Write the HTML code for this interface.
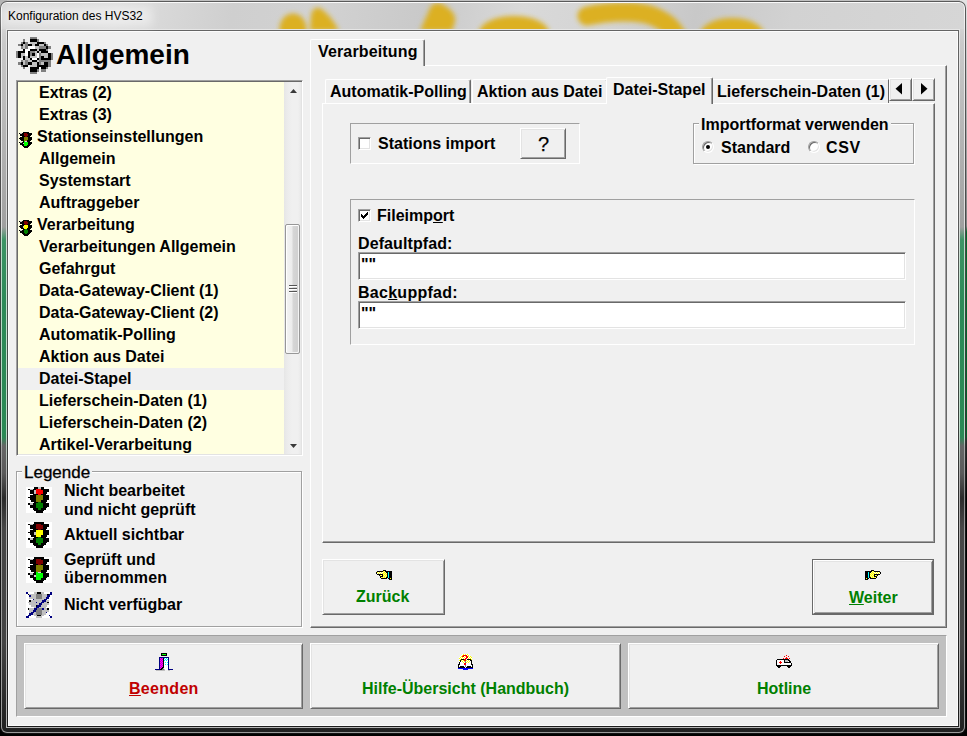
<!DOCTYPE html>
<html lang="de">
<head>
<meta charset="utf-8">
<title>Konfiguration des HVS32</title>
<style>
*{box-sizing:border-box;margin:0;padding:0}
html,body{width:967px;height:736px;overflow:hidden}
body{position:relative;background:#000;font-family:"Liberation Sans",Arial,sans-serif;font-size:16px;font-weight:bold;color:#000}
.a{position:absolute}
.t{position:absolute;white-space:nowrap;line-height:18px;height:18px}
.n{font-weight:normal}
u{text-decoration:underline;text-underline-offset:1px;text-decoration-thickness:1px}
/* outside strips */
#o-top{left:0;top:0;width:967px;height:8px;background:#c0c0c0}
#o-right{left:960px;top:0;width:7px;height:736px;background:linear-gradient(#e4e4e4 0,#c8c8c8 60px,#808080 226px,#056a2c 232px,#045c26 437px,#2a2a2a 441px,#000 500px,#000 100%)}
#o-left{left:0;top:0;width:7px;height:20px;background:#b4b4b4}
/* window frame */
#f0{left:0;top:1px;width:966px;height:733px;border-radius:7px;background:linear-gradient(#5a5a5a 0,#4c4c4c 200px,#3b4a41 300px,#333 440px,#161616 500px,#111 100%)}
#f1{left:1px;top:2px;width:964px;height:731px;border-radius:6px;background:linear-gradient(#fafafa 0,#ececec 28px,#dedede 225px,#b9dcc8 236px,#b4d8c2 436px,#a8a8a8 444px,#8c8c8c 495px,#a0a0a0 540px,#9a9a9a 100%)}
#f2{left:2px;top:3px;width:962px;height:729px;border-radius:5px;background:linear-gradient(#dcdcdc 0,#d2d2d2 26px,#cacaca 40px,#a2a2a2 215px,#9f9f9f 224px,#3c9465 237px,#2d8a58 300px,#2b8955 434px,#666 443px,#5a5a5a 470px,#2b2b2b 495px,#474747 525px,#444 640px,#2a2a2a 700px,#202020 100%)}
#tb{left:2px;top:3px;width:962px;height:26px;overflow:hidden;border-radius:5px 5px 0 0;background:linear-gradient(100deg,#d6d6d6 0,#dedede 12%,#cfcfcf 24%,#d2d2d2 33%,#c9c9c9 44%,#d9d9d9 54%,#d4d4d4 63%,#c8c8c8 72%,#d2d2d2 82%,#d6d6d6 100%)}
.bl{position:absolute;background:#dcb022;filter:blur(1.6px)}
#c0{left:6px;top:29px;width:954px;height:699px;background:linear-gradient(#e6e6e6 0,#d8d8d8 190px,#c8e2d2 240px,#c0dccb 400px,#b0b0b0 445px,#b4b4b4 100%)}
#c1{left:7px;top:30px;width:952px;height:697px;background:linear-gradient(#646464 0,#585858 200px,#44524a 300px,#333 445px,#222 520px,#1c1c1c 100%)}
#cl{left:8px;top:31px;width:950px;height:695px;background:#f0f0f0;border:1px solid #fcfcfc}
#ttl{left:8px;top:9px;font:normal 12px/14px "Liberation Sans",sans-serif;letter-spacing:0;white-space:nowrap}
/* 3d */
.btn{position:absolute;background:#f0f0f0;border:1px solid;border-color:#fff #696969 #696969 #fff;box-shadow:inset 1px 1px #e3e3e3,inset -1px -1px #a0a0a0}
.sunk{position:absolute;border:1px solid;border-color:#a0a0a0 #fff #fff #a0a0a0;box-shadow:inset 1px 1px #696969,inset -1px -1px #e3e3e3}
.etch{position:absolute;border:1px solid;border-color:#a0a0a0 #fff #fff #a0a0a0}
.grp{position:absolute;border:1px solid #a0a0a0;box-shadow:1px 1px #fff,inset 1px 1px #fff}
svg{position:absolute;overflow:visible}
.px{shape-rendering:crispEdges}
/* list */
#lb{left:16px;top:80px;width:287px;height:376px;background:#ffffe1}
#lbc{position:absolute;left:1px;top:1px;width:266px;height:372px;overflow:hidden}
.li{position:absolute;left:0;width:266px;height:22px}
.li span{position:absolute;left:21px;top:2px;line-height:18px;white-space:nowrap}
.li.h span{left:19px}
.sel{background:#f0f0f0}
#sb{position:absolute;left:267px;top:1px;width:17px;height:372px;background:linear-gradient(90deg,#e6e6e6 0,#ebebeb 3px,#f0f0f0 8px,#f0f0f0 14px,#e9e9e9 17px)}
#th{position:absolute;left:1px;top:142px;width:15px;height:130px;border:1px solid #979797;border-radius:2px;background:linear-gradient(90deg,#f4f4f4 0,#ececec 45%,#d6d6d6 55%,#cfcfcf 100%);box-shadow:inset 1px 1px #fff,inset -1px -1px #f4f4f4}

.itab{border:1px solid;border-color:#fff #696969 transparent #fff;border-bottom:0;border-radius:2px 2px 0 0;box-shadow:inset -1px 0 #a0a0a0}
.cb{width:13px;height:13px;background:#fff;border:1px solid;border-color:#a0a0a0 #fff #fff #a0a0a0;box-shadow:inset 1px 1px #696969,inset -1px -1px #e3e3e3}
.rb{width:12px;height:12px;border-radius:50%;background:#fff;border:1px solid;border-color:#a0a0a0 #fff #fff #a0a0a0;box-shadow:inset 1px 1px #696969,inset -1px -1px #e3e3e3}
.rb i{position:absolute;left:3px;top:3px;width:4px;height:4px;background:#000;border-radius:50%}
.inp{background:#fff}
.inp span{position:absolute;left:2px;top:3px;line-height:18px}
.g{color:#008000}.r{color:#c00000}
</style>
</head>
<body>
<div class="a" id="o-top"></div><div class="a" id="o-left"></div><div class="a" id="o-right"></div>
<div class="a" id="f0"></div><div class="a" id="f1"></div><div class="a" id="f2"></div>
<div class="a" id="tb">
<svg style="left:0;top:0" width="962" height="26" viewBox="2 3 962 26"><defs><filter id="bf" x="-5%" y="-50%" width="110%" height="200%"><feGaussianBlur stdDeviation="2.6"/></filter></defs>
<g filter="url(#bf)" fill="#dcb022">
<ellipse cx="293" cy="29" rx="13.5" ry="15.5"/>
<path d="M310 31L311 15Q313 6 320 8Q331 15 339 31Z"/>
<path d="M420 31L431 6Q436 1 442 4Q457 12 455 22L452 31Z"/>
<ellipse cx="514" cy="33" rx="35" ry="17"/>
<path d="M587 16C610 11 640 10 655 17S674 30 680 42" fill="none" stroke="#dcb022" stroke-width="19" stroke-linecap="round"/>
<ellipse cx="732" cy="35" rx="32" ry="17"/>
</g></svg>
</div>
<div class="a" id="c0"></div><div class="a" id="c1"></div><div class="a" id="cl"></div>
<div class="a" style="left:2px;top:7px;width:150px;height:19px;background:rgba(255,255,255,.45);filter:blur(5px)"></div>
<div class="a" id="ttl">Konfiguration des HVS32</div>

<svg width="0" height="0" style="left:0;top:0">
<defs>
<g id="tl">
<path fill="#000" d="M4 0h6v1h-6zM0 1h13v1h-13zM1 2h12v1h-12zM1 3h11v1h-11zM3 4h8v1h-8zM1 5h12v1h-12zM0 6h13v1h-13zM1 7h12v1h-12zM2 8h10v1h-10zM4 9h7v1h-7zM0 10h13v1h-13zM1 11h12v1h-12zM1 12h11v1h-11zM3 13h8v1h-8zM4 14h6v1h-6zM5 15h4v1h-4z"/>
<path fill="#c0c0c0" d="M1 1h2v1h-2zM1 10h2v1h-2z"/>
</g>
<g id="tlr"><path fill="#f00" d="M5 1h3v1h-3zM5 2h4v2h-4zM6 4h2v1h-2z"/><path fill="#c0c0c0" d="M4 2h1v2h-1zM6 0h2v1h-2z"/><path fill="#808000" d="M5 5h4v3h-4zM5 8h3v1h-3z"/><path fill="#008000" d="M6 9h2v1h-2zM5 10h4v3h-4zM6 13h2v1h-2z"/></g>
<g id="tly"><path fill="#800000" d="M5 1h3v1h-3zM5 2h4v2h-4zM6 4h2v1h-2z"/><path fill="#ff0" d="M5 5h4v3h-4zM5 8h3v1h-3z"/><path fill="#c0c0c0" d="M4 6h1v2h-1z"/><path fill="#008000" d="M6 9h2v1h-2zM5 10h4v3h-4zM6 13h2v1h-2z"/></g>
<g id="tlg"><path fill="#800000" d="M5 1h3v1h-3zM5 2h4v2h-4zM6 4h2v1h-2z"/><path fill="#808000" d="M5 5h4v3h-4zM5 8h3v1h-3z"/><path fill="#0f0" d="M5 9h3v1h-3zM5 10h4v3h-4zM5 13h3v1h-3z"/><path fill="#e0c0e0" d="M4 11h1v1h-1zM6 9h2v1h-2z"/></g>
</defs>
</svg>
<!-- header -->
<div class="t" id="hd" style="left:56px;top:39px;font-size:28px;line-height:32px;height:32px">Allgemein</div>

<!-- listbox -->
<div class="sunk" id="lb">
 <div id="lbc">
  <div class="li" style="top:0"><span>Extras (2)</span></div>
  <div class="li" style="top:22px"><span>Extras (3)</span></div>
  <div class="li h" style="top:44px"><svg class="px tl" style="left:1px;top:6px" width="13" height="16" viewBox="0 0 13 16"><use href="#tl"/><use href="#tlg"/></svg><span>Stationseinstellungen</span></div>
  <div class="li" style="top:66px"><span>Allgemein</span></div>
  <div class="li" style="top:88px"><span>Systemstart</span></div>
  <div class="li" style="top:110px"><span>Auftraggeber</span></div>
  <div class="li h" style="top:132px"><svg class="px tl" style="left:1px;top:6px" width="13" height="16" viewBox="0 0 13 16"><use href="#tl"/><use href="#tly"/></svg><span>Verarbeitung</span></div>
  <div class="li" style="top:154px"><span>Verarbeitungen Allgemein</span></div>
  <div class="li" style="top:176px"><span>Gefahrgut</span></div>
  <div class="li" style="top:198px"><span>Data-Gateway-Client (1)</span></div>
  <div class="li" style="top:220px"><span>Data-Gateway-Client (2)</span></div>
  <div class="li" style="top:242px"><span>Automatik-Polling</span></div>
  <div class="li" style="top:264px"><span>Aktion aus Datei</span></div>
  <div class="li sel" style="top:286px"><span>Datei-Stapel</span></div>
  <div class="li" style="top:308px"><span>Lieferschein-Daten (1)</span></div>
  <div class="li" style="top:330px"><span>Lieferschein-Daten (2)</span></div>
  <div class="li" style="top:352px"><span>Artikel-Verarbeitung</span></div>
 </div>
 <div id="sb">
  <svg style="left:6px;top:7px" width="7" height="4" viewBox="0 0 7 4"><path d="M0 4 L3.500 0 L7 4 Z" fill="#3a3a3a"/></svg>
  <div id="th"><i class="a" style="left:3px;top:60px;width:8px;height:1px;background:#555;box-shadow:0 1px #fff,0 3px #555,0 4px #fff,0 6px #555,0 7px #fff"></i></div>
  <svg style="left:6px;top:362px" width="7" height="4" viewBox="0 0 7 4"><path d="M0 0 L3.500 4 L7 0 Z" fill="#3a3a3a"/></svg>
 </div>
</div>

<!-- legend -->
<div class="grp" style="left:16px;top:471px;width:286px;height:156px"></div>
<div class="t n" style="left:22px;top:464px;padding:0 2px;background:#f0f0f0;font-size:17px;-webkit-text-stroke:.3px #000">Legende</div>
<div class="a" style="left:26px;top:487px;width:26px;height:26px;background:#fff"><svg class="px" width="26" height="26" viewBox="-1.23 0 16 16"><use href="#tl"/><use href="#tlr"/></svg></div>
<div class="a" style="left:26px;top:522px;width:26px;height:26px;background:#fff"><svg class="px" width="26" height="26" viewBox="-1.23 0 16 16"><use href="#tl"/><use href="#tly"/></svg></div>
<div class="a" style="left:26px;top:557px;width:26px;height:26px;background:#fff"><svg class="px" width="26" height="26" viewBox="-1.23 0 16 16"><use href="#tl"/><use href="#tlg"/></svg></div>
<div class="a" style="left:26px;top:592px;width:26px;height:26px;background:#fff"><svg class="px" style="left:0px;top:0px" width="26" height="26" viewBox="0 0 16 16"><path fill="#000080" d="M0 0h1v1h-1zM15 0h1v1h-1zM14 1h2v1h-2zM2 2h1v1h-1zM13 2h2v1h-2zM12 3h2v1h-2zM4 4h1v1h-1zM11 4h2v1h-2zM10 5h2v1h-2zM6 6h1v1h-1zM9 6h2v1h-2zM8 7h2v1h-2zM7 8h2v1h-2zM6 9h2v1h-2zM5 10h2v1h-2zM10 10h1v1h-1zM4 11h2v1h-2zM3 12h2v1h-2zM12 12h1v1h-1zM2 13h2v1h-2zM1 14h2v1h-2zM14 14h1v1h-1zM0 15h2v1h-2zM15 15h1v1h-1z"/><path fill="#c0c0c0" d="M5 0h2v1h-2zM9 0h2v1h-2zM2 1h4v1h-4zM10 1h3v1h-3zM3 2h3v1h-3zM10 2h3v1h-3zM2 3h4v1h-4zM10 3h2v1h-2zM5 4h6v1h-6zM3 5h7v1h-7zM12 5h2v1h-2zM1 6h5v1h-5zM7 6h2v1h-2zM11 6h2v1h-2zM2 7h6v1h-6zM10 7h4v1h-4zM3 8h3v1h-3zM9 8h4v1h-4zM5 9h1v1h-1zM8 9h4v1h-4zM2 10h3v1h-3zM11 10h2v1h-2zM2 11h2v1h-2zM10 11h4v1h-4zM2 12h1v1h-1zM5 12h1v1h-1zM10 12h2v1h-2zM4 13h2v1h-2zM10 13h2v1h-2zM5 14h2v1h-2zM9 14h2v1h-2zM6 15h4v1h-4z"/><path fill="#000" d="M7 0h2v1h-2zM1 1h1v1h-1zM13 1h1v1h-1zM2 5h1v1h-1zM13 6h1v1h-1zM6 8h1v1h-1zM1 10h1v1h-1zM13 10h1v1h-1zM7 14h2v1h-2z"/><path fill="#808080" d="M6 1h4v1h-4zM6 2h4v1h-4zM6 3h4v1h-4zM7 10h3v1h-3zM6 11h4v1h-4zM6 12h4v1h-4zM6 13h4v1h-4z"/></svg></div>
<div class="t" style="left:64px;top:482px">Nicht bearbeitet</div>
<div class="t" style="left:64px;top:501px">und nicht geprüft</div>
<div class="t" style="left:64px;top:526px">Aktuell sichtbar</div>
<div class="t" style="left:64px;top:551px">Geprüft und</div>
<div class="t" style="left:64px;top:569px;letter-spacing:.2px">übernommen</div>
<div class="t" style="left:64px;top:596px">Nicht verfügbar</div>

<!-- outer tab control -->
<div class="a" id="otb" style="left:310px;top:65px;width:637px;height:563px;border:1px solid;border-color:#fff #696969 #696969 #fff;box-shadow:inset -1px -1px #a0a0a0"></div>
<div class="a" id="otab" style="left:310px;top:39px;width:115px;height:27px;background:#f0f0f0;border:1px solid;border-color:#fff #696969 transparent #fff;border-bottom:0;border-radius:2px 2px 0 0;box-shadow:inset -1px 0 #a0a0a0"></div>
<div class="t" style="left:318px;top:43px;letter-spacing:.15px">Verarbeitung</div>

<!-- inner tab control -->
<div class="a" id="itb" style="left:322px;top:103px;width:613px;height:440px;border:1px solid;border-color:#fff #696969 #696969 #fff;box-shadow:inset -1px -1px #a0a0a0"></div>
<div class="a itab" style="left:325px;top:79px;width:146px;height:24px"></div>
<div class="t" style="left:330px;top:83px">Automatik-Polling</div>
<div class="a itab" style="left:472px;top:79px;width:136px;height:24px"></div>
<div class="t" style="left:477px;top:83px">Aktion aus Datei</div>
<div class="a itab" style="left:711px;top:79px;width:178px;height:24px;border-left:0;box-shadow:none;border-radius:0"></div>
<div class="t" style="left:717px;top:83px">Lieferschein-Daten (1)</div>
<div class="a itab" style="left:606px;top:77px;width:107px;height:27px;background:#f0f0f0"></div>
<div class="t" style="left:613px;top:81px">Datei-Stapel</div>
<div class="btn" style="left:889px;top:78px;width:23px;height:23px"><svg style="left:5px;top:4px" width="7" height="12" viewBox="0 0 7 12"><path d="M7 0v11.500L0.500 5.750z" fill="#000"/></svg></div>
<div class="btn" style="left:912px;top:78px;width:23px;height:23px"><svg style="left:8px;top:4px" width="7" height="12" viewBox="0 0 7 12"><path d="M0 0v11.500L6.500 5.750z" fill="#000"/></svg></div>

<!-- stations group -->
<div class="etch" style="left:350px;top:123px;width:230px;height:41px"></div>
<div class="a cb" style="left:358px;top:137px"></div>
<div class="t" style="left:378px;top:135px">Stations import</div>
<div class="btn" style="left:520px;top:128px;width:46px;height:31px"></div>
<div class="t n" style="left:538px;top:133px;font-size:20px;line-height:23px;height:23px;-webkit-text-stroke:.25px #000">?</div>

<!-- import format -->
<div class="grp" style="left:693px;top:123px;width:221px;height:41px"></div>
<div class="t" style="left:699px;top:116px;padding:0 2px;background:#f0f0f0">Importformat verwenden</div>
<div class="a rb" style="left:702px;top:141px"><i></i></div>
<div class="t" style="left:721px;top:139px">Standard</div>
<div class="a rb" style="left:808px;top:141px"></div>
<div class="t" style="left:826px;top:139px;letter-spacing:0.6px">CSV</div>

<!-- fileimport group -->
<div class="etch" style="left:350px;top:199px;width:565px;height:146px"></div>
<div class="a cb" style="left:358px;top:209px"><svg class="px" style="left:2px;top:2px" width="7" height="7" viewBox="0 0 7 7"><path fill="#000" d="M0 2h1v3h-1zM1 3h1v3h-1zM2 4h1v3h-1zM3 3h1v3h-1zM4 2h1v3h-1zM5 1h1v3h-1zM6 0h1v3h-1z"/></svg></div>
<div class="t" style="left:377px;top:207px">Fileimp<u>o</u>rt</div>
<div class="t" style="left:358px;top:235px;letter-spacing:.1px">Defaultpfad:</div>
<div class="sunk inp" style="left:358px;top:252px;width:548px;height:28px"><span>""</span></div>
<div class="t" style="left:358px;top:284px;letter-spacing:.27px">Bac<u>k</u>uppfad:</div>
<div class="sunk inp" style="left:358px;top:301px;width:548px;height:28px"><span>""</span></div>

<!-- nav buttons -->
<div class="btn" style="left:322px;top:559px;width:123px;height:56px"></div>
<div class="t g" style="left:356px;top:588px">Zurück</div>
<div class="a" style="left:812px;top:559px;width:122px;height:56px;background:#696969"></div>
<div class="btn" style="left:813px;top:560px;width:120px;height:54px"></div>
<div class="t g" style="left:849px;top:589px"><u>W</u>eiter</div>

<!-- bottom panel -->
<div class="a" style="left:16px;top:635px;width:931px;height:82px;background:#c0c0c0;border:1px solid;border-color:#a0a0a0 #fff #fff #a0a0a0"></div>
<div class="btn" style="left:24px;top:643px;width:279px;height:66px"></div>
<div class="t r" style="left:129px;top:680px;letter-spacing:0.3px"><u>B</u>eenden</div>
<div class="btn" style="left:310px;top:643px;width:311px;height:66px"></div>
<div class="t g" style="left:362px;top:680px">Hilfe-Übersicht (Handbuch)</div>
<div class="btn" style="left:628px;top:643px;width:311px;height:66px"></div>
<div class="t g" style="left:757px;top:680px">Hotline</div>

<!-- icons -->
<svg class="px" style="left:376px;top:570px" width="16" height="10" viewBox="0 0 16 10"><path fill="#000" d="M7 0h3v1h-3zM1 1h6v1h-6zM9 1h7v1h-7zM0 2h1v1h-1zM10 2h2v1h-2zM13 2h3v1h-3zM0 3h1v1h-1zM11 3h1v1h-1zM13 3h3v1h-3zM1 4h6v1h-6zM11 4h1v1h-1zM13 4h3v1h-3zM3 5h1v1h-1zM6 5h1v1h-1zM11 5h1v1h-1zM13 5h3v1h-3zM4 6h3v1h-3zM11 6h1v1h-1zM13 6h3v1h-3zM4 7h1v1h-1zM10 7h2v1h-2zM13 7h3v1h-3zM5 8h6v1h-6zM12 8h2v1h-2zM15 8h1v1h-1zM13 9h3v1h-3z"/><path fill="#ffff00" d="M7 1h1v1h-1zM1 2h1v1h-1zM3 2h1v1h-1zM5 2h1v1h-1zM8 2h1v1h-1zM2 3h1v1h-1zM4 3h1v1h-1zM6 3h2v1h-2zM9 3h1v1h-1zM8 4h1v1h-1zM10 4h1v1h-1zM4 5h1v1h-1zM7 5h1v1h-1zM9 5h1v1h-1zM8 6h1v1h-1zM10 6h1v1h-1zM6 7h1v1h-1zM8 7h1v1h-1zM14 8h1v1h-1z"/><path fill="#ffff80" d="M8 1h1v1h-1zM7 2h1v1h-1zM9 2h1v1h-1zM8 3h1v1h-1zM10 3h1v1h-1zM7 4h1v1h-1zM9 4h1v1h-1zM5 5h1v1h-1zM8 5h1v1h-1zM10 5h1v1h-1zM7 6h1v1h-1zM9 6h1v1h-1zM5 7h1v1h-1zM7 7h1v1h-1zM9 7h1v1h-1z"/><path fill="#fff" d="M2 2h1v1h-1zM4 2h1v1h-1zM6 2h1v1h-1zM1 3h1v1h-1zM3 3h1v1h-1zM5 3h1v1h-1z"/><path fill="#00ffff" d="M12 2h1v1h-1zM12 3h1v1h-1zM12 4h1v1h-1zM12 5h1v1h-1zM12 6h1v1h-1zM12 7h1v1h-1z"/></svg>
<svg class="px" style="left:865px;top:570px" width="16" height="10" viewBox="0 0 16 10"><path fill="#000" d="M6 0h3v1h-3zM0 1h7v1h-7zM9 1h6v1h-6zM0 2h3v1h-3zM4 2h2v1h-2zM15 2h1v1h-1zM0 3h3v1h-3zM4 3h1v1h-1zM15 3h1v1h-1zM0 4h3v1h-3zM4 4h1v1h-1zM9 4h6v1h-6zM0 5h3v1h-3zM4 5h1v1h-1zM9 5h1v1h-1zM12 5h1v1h-1zM0 6h3v1h-3zM4 6h1v1h-1zM9 6h3v1h-3zM0 7h3v1h-3zM4 7h2v1h-2zM11 7h1v1h-1zM0 8h1v1h-1zM2 8h2v1h-2zM5 8h6v1h-6zM0 9h3v1h-3z"/><path fill="#ffff80" d="M7 1h1v1h-1zM6 2h1v1h-1zM8 2h1v1h-1zM5 3h1v1h-1zM7 3h1v1h-1zM6 4h1v1h-1zM8 4h1v1h-1zM5 5h1v1h-1zM7 5h1v1h-1zM10 5h1v1h-1zM6 6h1v1h-1zM8 6h1v1h-1zM6 7h1v1h-1zM8 7h1v1h-1zM10 7h1v1h-1z"/><path fill="#ffff00" d="M8 1h1v1h-1zM7 2h1v1h-1zM10 2h1v1h-1zM12 2h1v1h-1zM14 2h1v1h-1zM6 3h1v1h-1zM8 3h2v1h-2zM11 3h1v1h-1zM13 3h1v1h-1zM5 4h1v1h-1zM7 4h1v1h-1zM6 5h1v1h-1zM8 5h1v1h-1zM11 5h1v1h-1zM5 6h1v1h-1zM7 6h1v1h-1zM7 7h1v1h-1zM9 7h1v1h-1zM1 8h1v1h-1z"/><path fill="#00ffff" d="M3 2h1v1h-1zM3 3h1v1h-1zM3 4h1v1h-1zM3 5h1v1h-1zM3 6h1v1h-1zM3 7h1v1h-1z"/><path fill="#fff" d="M9 2h1v1h-1zM11 2h1v1h-1zM13 2h1v1h-1zM10 3h1v1h-1zM12 3h1v1h-1zM14 3h1v1h-1z"/></svg>
<svg class="px" style="left:155px;top:653px" width="18" height="18" viewBox="0 0 18 18"><path fill="#000" d="M6 0h6v1h-6zM6 1h1v1h-1zM11 1h1v1h-1zM6 2h6v1h-6zM8 5h1v1h-1zM8 6h1v1h-1zM8 7h1v1h-1zM8 8h1v1h-1zM8 9h1v1h-1zM8 10h1v1h-1zM8 11h1v1h-1zM8 12h1v1h-1zM8 13h1v1h-1zM7 14h2v1h-2zM6 15h2v1h-2zM5 16h2v1h-2z"/><path fill="#00ff00" d="M7 1h4v1h-4z"/><path fill="#000080" d="M4 4h10v1h-10zM4 5h1v1h-1zM13 5h1v1h-1zM4 6h1v1h-1zM13 6h1v1h-1zM4 7h1v1h-1zM13 7h1v1h-1zM4 8h1v1h-1zM13 8h1v1h-1zM4 9h1v1h-1zM13 9h1v1h-1zM4 10h1v1h-1zM13 10h1v1h-1zM4 11h1v1h-1zM13 11h1v1h-1zM4 12h1v1h-1zM13 12h1v1h-1zM4 13h1v1h-1zM13 13h1v1h-1zM4 14h1v1h-1zM13 14h1v1h-1zM4 15h1v1h-1zM13 15h1v1h-1zM0 16h5v1h-5zM13 16h5v1h-5z"/><path fill="#ff00ff" d="M5 5h1v1h-1zM7 5h1v1h-1zM6 6h1v1h-1zM5 7h1v1h-1zM7 7h1v1h-1zM6 8h1v1h-1zM5 9h1v1h-1zM7 9h1v1h-1zM6 10h1v1h-1zM5 11h1v1h-1zM7 11h1v1h-1zM6 12h1v1h-1zM5 13h1v1h-1zM7 13h1v1h-1zM6 14h1v1h-1zM5 15h1v1h-1z"/><path fill="#c000c0" d="M6 5h1v1h-1zM5 6h1v1h-1zM7 6h1v1h-1zM6 7h1v1h-1zM5 8h1v1h-1zM7 8h1v1h-1zM6 9h1v1h-1zM5 10h1v1h-1zM7 10h1v1h-1zM6 11h1v1h-1zM5 12h1v1h-1zM7 12h1v1h-1zM6 13h1v1h-1zM5 14h1v1h-1z"/><path fill="#00ffff" d="M9 5h1v1h-1zM11 5h1v1h-1zM10 6h1v1h-1zM12 6h1v1h-1zM9 7h1v1h-1zM11 7h1v1h-1zM10 9h1v1h-1zM12 9h1v1h-1zM10 11h1v1h-1zM12 11h1v1h-1z"/><path fill="#fff" d="M10 5h1v1h-1zM12 5h1v1h-1zM9 6h1v1h-1zM11 6h1v1h-1zM10 7h1v1h-1zM12 7h1v1h-1zM9 8h4v1h-4zM9 9h1v1h-1zM11 9h1v1h-1zM9 10h4v1h-4zM9 11h1v1h-1zM11 11h1v1h-1zM9 12h4v1h-4zM9 13h4v1h-4zM9 14h4v1h-4zM9 15h4v1h-4zM10 16h3v1h-3z"/><path fill="#c0c0c0" d="M8 15h1v1h-1zM9 16h1v1h-1zM1 17h9v1h-9zM13 17h2v1h-2z"/><path fill="#808080" d="M7 16h2v1h-2z"/></svg>
<svg class="px" style="left:458px;top:654px" width="15" height="16" viewBox="0 0 15 16"><path fill="#fff" d="M4 0h1v1h-1zM6 0h1v1h-1zM8 0h1v1h-1zM10 0h1v1h-1zM3 1h1v1h-1zM9 1h1v1h-1zM11 1h1v1h-1zM2 2h1v1h-1zM6 2h1v1h-1zM11 2h1v1h-1zM1 3h1v1h-1zM3 3h1v1h-1zM5 3h1v1h-1zM7 3h1v1h-1zM10 3h1v1h-1zM12 3h1v1h-1zM2 4h1v1h-1zM4 4h1v1h-1zM6 4h1v1h-1zM9 4h1v1h-1zM11 4h1v1h-1zM13 4h1v1h-1zM1 5h1v1h-1zM8 5h1v1h-1zM4 6h1v1h-1zM9 6h1v1h-1zM11 6h1v1h-1zM1 7h1v1h-1zM3 7h1v1h-1zM5 7h1v1h-1zM8 7h1v1h-1zM10 7h1v1h-1zM12 7h1v1h-1zM2 8h3v1h-3zM6 8h1v1h-1zM9 8h1v1h-1zM11 8h2v1h-2zM2 9h4v1h-4zM8 9h5v1h-5zM2 10h4v1h-4zM8 10h5v1h-5zM1 11h6v1h-6zM8 11h6v1h-6zM1 12h1v1h-1zM6 12h1v1h-1zM8 12h1v1h-1zM13 12h1v1h-1zM7 13h1v1h-1z"/><path fill="#ffff00" d="M5 0h1v1h-1zM7 0h1v1h-1zM9 0h1v1h-1zM4 1h1v1h-1zM10 1h1v1h-1zM3 2h1v1h-1zM7 2h1v1h-1zM10 2h1v1h-1zM12 2h1v1h-1zM2 3h1v1h-1zM4 3h1v1h-1zM6 3h1v1h-1zM11 3h1v1h-1zM13 3h1v1h-1zM1 4h1v1h-1zM3 4h1v1h-1zM5 4h1v1h-1zM10 4h1v1h-1zM12 4h1v1h-1zM2 5h1v1h-1zM13 5h1v1h-1zM1 6h1v1h-1zM3 6h1v1h-1zM5 6h1v1h-1zM8 6h1v1h-1zM10 6h1v1h-1zM4 7h1v1h-1zM6 7h1v1h-1zM9 7h1v1h-1zM11 7h1v1h-1zM5 8h1v1h-1zM8 8h1v1h-1zM10 8h1v1h-1z"/><path fill="#ff0000" d="M5 1h4v1h-4zM4 2h2v1h-2zM8 2h2v1h-2zM8 3h2v1h-2zM7 4h2v1h-2zM6 5h2v1h-2zM6 6h2v1h-2zM6 9h2v1h-2zM6 10h2v1h-2z"/><path fill="#000" d="M3 5h3v1h-3zM9 5h4v1h-4zM2 6h1v1h-1zM12 6h2v1h-2zM2 7h1v1h-1zM13 7h1v1h-1zM1 8h1v1h-1zM13 8h1v1h-1zM1 9h1v1h-1zM13 9h1v1h-1zM0 10h2v1h-2zM13 10h2v1h-2zM0 11h1v1h-1zM14 11h1v1h-1zM0 12h1v1h-1zM2 12h4v1h-4zM9 12h4v1h-4zM14 12h1v1h-1zM0 13h7v1h-7zM8 13h7v1h-7z"/><path fill="#808080" d="M7 7h1v1h-1zM7 8h1v1h-1zM7 11h1v1h-1zM7 12h1v1h-1z"/><path fill="#0000ff" d="M0 14h15v1h-15zM5 15h5v1h-5z"/></svg>
<svg class="px" style="left:776px;top:655px" width="16" height="13" viewBox="0 0 16 13"><path fill="#ff0000" d="M10 0h1v1h-1zM8 1h1v1h-1zM12 1h1v1h-1zM10 2h1v1h-1zM7 3h1v1h-1zM9 3h3v1h-3zM13 3h1v1h-1zM4 6h1v1h-1zM3 7h3v1h-3zM4 8h1v1h-1z"/><path fill="#000" d="M1 4h12v1h-12zM0 5h1v1h-1zM8 5h1v1h-1zM12 5h2v1h-2zM0 6h1v1h-1zM8 6h1v1h-1zM13 6h2v1h-2zM0 7h1v1h-1zM8 7h7v1h-7zM0 8h1v1h-1zM15 8h1v1h-1zM0 9h1v1h-1zM15 9h1v1h-1zM0 10h16v1h-16zM1 11h4v1h-4zM11 11h4v1h-4zM2 12h2v1h-2zM12 12h2v1h-2z"/><path fill="#fff" d="M1 5h7v1h-7zM1 6h3v1h-3zM5 6h3v1h-3zM12 6h1v1h-1zM1 7h2v1h-2zM6 7h2v1h-2zM1 8h3v1h-3zM5 8h10v1h-10zM1 9h14v1h-14z"/><path fill="#c0c0c0" d="M9 5h3v1h-3zM9 6h3v1h-3z"/></svg>
<svg class="px" style="left:16px;top:37px" width="37" height="37" viewBox="0 0 16 16"><path fill="#808080" d="M6 0h3v1h-3zM3 1h1v1h-1zM9 1h1v1h-1zM2 2h1v1h-1zM4 2h1v1h-1zM12 2h1v1h-1zM1 3h1v1h-1zM4 3h1v1h-1zM13 3h1v1h-1zM2 4h1v1h-1zM4 4h1v1h-1zM10 4h3v1h-3zM14 4h1v1h-1zM13 5h1v1h-1zM0 6h1v1h-1zM6 6h2v1h-2zM0 7h1v1h-1zM6 7h1v1h-1zM10 7h1v1h-1zM15 7h1v1h-1zM0 8h1v1h-1zM10 8h1v1h-1zM15 8h1v1h-1zM10 9h1v1h-1zM15 9h1v1h-1zM2 10h1v1h-1zM4 10h1v1h-1zM10 10h5v1h-5zM1 11h1v1h-1zM4 11h1v1h-1zM10 11h1v1h-1zM14 11h1v1h-1zM2 12h1v1h-1zM14 12h1v1h-1zM3 13h1v1h-1zM13 13h1v1h-1zM9 14h1v1h-1zM11 14h2v1h-2zM6 15h3v1h-3z"/><path fill="#000" d="M6 1h3v1h-3zM3 2h1v1h-1zM9 2h3v1h-3zM2 3h1v1h-1zM5 3h2v1h-2zM8 3h2v1h-2zM12 3h1v1h-1zM13 4h1v1h-1zM3 5h1v1h-1zM6 5h3v1h-3zM10 5h3v1h-3zM1 6h3v1h-3zM5 6h1v1h-1zM9 6h1v1h-1zM11 6h3v1h-3zM1 7h1v1h-1zM5 7h1v1h-1zM7 7h1v1h-1zM14 7h1v1h-1zM1 8h1v1h-1zM3 8h1v1h-1zM5 8h1v1h-1zM11 8h1v1h-1zM14 8h1v1h-1zM3 9h1v1h-1zM6 9h1v1h-1zM9 9h1v1h-1zM11 9h4v1h-4zM7 10h2v1h-2zM2 11h1v1h-1zM5 11h2v1h-2zM9 11h1v1h-1zM12 11h2v1h-2zM3 12h2v1h-2zM9 12h5v1h-5zM6 13h4v1h-4zM11 13h2v1h-2zM6 14h3v1h-3z"/><path fill="#c0c0c0" d="M6 2h3v1h-3zM3 3h1v1h-1zM7 3h1v1h-1zM10 3h2v1h-2zM3 4h1v1h-1zM8 4h2v1h-2zM9 5h1v1h-1zM8 6h1v1h-1zM10 6h1v1h-1zM2 7h2v1h-2zM8 7h1v1h-1zM11 7h3v1h-3zM2 8h1v1h-1zM4 8h1v1h-1zM6 8h3v1h-3zM12 8h2v1h-2zM4 9h2v1h-2zM3 10h1v1h-1zM5 10h2v1h-2zM9 10h1v1h-1zM3 11h1v1h-1zM7 11h2v1h-2zM11 11h1v1h-1zM6 12h3v1h-3z"/><path fill="#fff" d="M5 4h3v1h-3zM4 5h2v1h-2zM4 6h1v1h-1zM4 7h1v1h-1zM9 7h1v1h-1zM9 8h1v1h-1zM7 9h2v1h-2zM10 13h1v1h-1z"/></svg>
<!-- CONTENT4 -->
</body>
</html>
